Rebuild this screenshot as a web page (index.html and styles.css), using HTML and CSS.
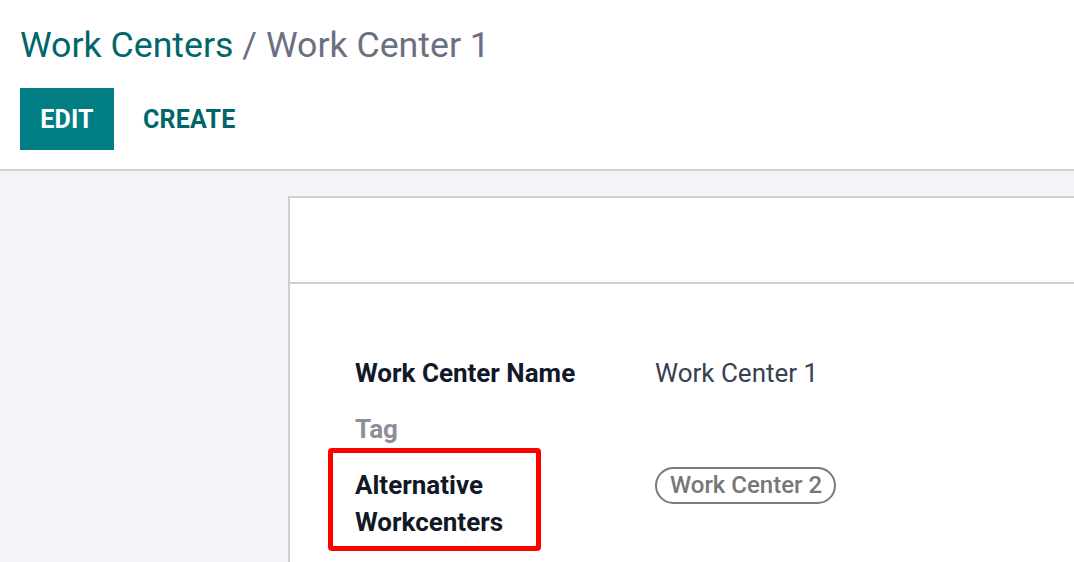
FILE: index.html
```html
<!DOCTYPE html>
<html>
<head>
<meta charset="utf-8">
<link rel="stylesheet" href="styles.css">
</head>
<body>
<div class="control-panel">
  <div class="breadcrumb"><span class="crumb-link">Work Centers</span><span class="crumb-sep"> / </span><span class="crumb-active">Work Center 1</span></div>
  <div class="buttons">
    <button class="btn btn-primary">EDIT</button>
    <button class="btn btn-secondary">CREATE</button>
  </div>
</div>
<div class="content">
  <div class="sheet">
    <div class="sheet-head"></div>
    <div class="sheet-body">
      <div class="form-grid">
        <div class="label">Work Center Name</div>
        <div class="value">Work Center 1</div>
        <div class="label muted">Tag</div>
        <div class="value"></div>
        <div class="label highlighted"><span class="marker"></span>Alternative<br>Workcenters</div>
        <div class="value"><span class="tag-badge">Work Center 2</span></div>
      </div>
    </div>
  </div>
</div>
</body>
</html>
```
FILE: styles.css
```css
* { box-sizing: border-box; }
html, body { margin: 0; padding: 0; }
body {
  font-family: Roboto, "Noto Sans", sans-serif;
  background: #ffffff;
  width: 1074px;
  height: 562px;
  overflow: hidden;
}
.control-panel {
  height: 171px;
  padding: 19px 20px 0 20px;
  border-bottom: 2px solid #d0d1d5;
  background: #fff;
}
.breadcrumb {
  font-size: 35.7px;
  line-height: 52px;
  height: 52px;
}
.crumb-link { color: #01666b; }
.crumb-sep, .crumb-active { color: #6b7080; }
.buttons {
  display: flex;
  align-items: center;
  margin-top: 17px;
  gap: 9px;
}
.btn {
  font-family: Roboto, sans-serif;
  font-size: 25px;
  font-weight: 700;
  border: none;
  height: 62px;
  padding: 0 20px;
  margin: 0;
  letter-spacing: 0.2px;
}
.btn-primary { background: #017e84; color: #fff; width: 94px; }
.btn-secondary { background: transparent; color: #01666b; }
.content {
  background: #f3f4f8;
  height: 391px;
  padding: 25px 0 0 288px;
}
.sheet {
  background: #fff;
  border: 2px solid #cfd0d4;
  border-right: none;
  height: 100%;
  border-bottom: none;
}
.sheet-head {
  height: 86px;
  border-bottom: 2px solid #cfd0d4;
}
.sheet-body {
  padding: 71px 0 0 65px;
}
.form-grid {
  display: grid;
  grid-template-columns: 300px 1fr;
  row-gap: 19px;
  font-size: 26px;
  line-height: 37px;
}
.label { font-weight: 700; color: #111827; position: relative; }
.label.muted { color: #8b8f98; }
.value { color: #374151; }
.marker {
  position: absolute;
  left: -27px;
  top: -19px;
  width: 213px;
  height: 103px;
  border: 5px solid #ff0000;
  border-radius: 4px;
}
.tag-badge {
  display: inline-block;
  border: 2px solid #7a7a7a;
  border-radius: 19px;
  color: #777777;
  font-weight: 500;
  font-size: 24px;
  line-height: 33px;
  padding: 0 12px 0 13px;
  vertical-align: top;
}
```
